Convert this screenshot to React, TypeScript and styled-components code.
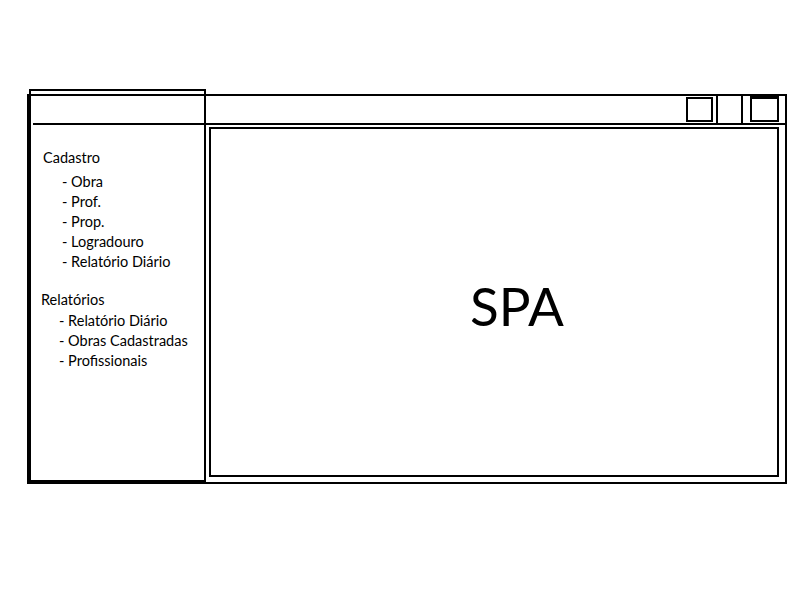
import styled, { createGlobalStyle } from "styled-components";

const GlobalStyle = createGlobalStyle`
  html, body {
    margin: 0;
    padding: 0;
    background: #ffffff;
  }

  body {
    width: 800px;
    height: 600px;
    font-family: Lato, "Open Sans", sans-serif;
    color: #000000;
  }
`;

const cadastro = ["Obra", "Prof.", "Prop.", "Logradouro", "Relatório Diário"];
const relatorios = ["Relatório Diário", "Obras Cadastradas", "Profissionais"];

export default function App() {
  return (
    <>
      <GlobalStyle />
      <Window>
        <TitleBar>
          <WinButton />
          <Separator $margin={3} />
          <Separator $margin={23} />
          <WinButton $wide />
        </TitleBar>

        <Sidebar>
          <MenuSection $offset={12} $titleGap={4}>
            <MenuTitle>Cadastro</MenuTitle>
            {cadastro.map((item) => (
              <MenuItem key={item} $indent={19}>
                - {item}
              </MenuItem>
            ))}
          </MenuSection>

          <MenuSection $offset={10} $titleGap={1} $top={18}>
            <MenuTitle>Relatórios</MenuTitle>
            {relatorios.map((item) => (
              <MenuItem key={item} $indent={18}>
                - {item}
              </MenuItem>
            ))}
          </MenuSection>
        </Sidebar>

        <Content>
          <Label>SPA</Label>
        </Content>
      </Window>
    </>
  );
}

export const Window = styled.div`
  width: 760px;
  height: 390px;
  margin: 94px 0 0 27px;

  box-sizing: border-box;
  border: 2px solid #000000;

  display: grid;
  grid-template-columns: 177px 1fr;
  grid-template-rows: 29px 1fr;
`;

export const TitleBar = styled.div`
  grid-column: 1 / 3;
  grid-row: 1;

  box-sizing: border-box;
  border-bottom: 2px solid #000000;
  margin-left: 4px;

  display: flex;
  justify-content: flex-end;
  align-items: stretch;

  padding-right: 6px;
`;

export const WinButton = styled.div<{ $wide?: boolean }>`
  box-sizing: border-box;
  width: ${(p) => (p.$wide ? "29px" : "27px")};
  height: ${(p) => (p.$wide ? "26px" : "25px")};
  margin-top: ${(p) => (p.$wide ? "0" : "1px")};
  margin-left: ${(p) => (p.$wide ? "7px" : "0")};

  border: 2px solid #000000;
  border-top-width: ${(p) => (p.$wide ? "3px" : "2px")};
`;

export const Separator = styled.div<{ $margin: number }>`
  width: 2px;
  margin-left: ${(p) => p.$margin}px;
  background: #000000;
`;

export const Sidebar = styled.nav`
  grid-column: 1;
  grid-row: 1 / 3;

  margin-top: -7px;

  box-sizing: border-box;
  border: 2px solid #000000;
  padding-top: 57px;

  display: flex;
  flex-direction: column;
`;

export const MenuSection = styled.div<{
  $offset: number;
  $titleGap: number;
  $top?: number;
}>`
  display: flex;
  flex-direction: column;

  margin-top: ${(p) => p.$top || 0}px;
  padding-left: ${(p) => p.$offset}px;

  font-size: 14.5px;
  line-height: 20px;

  & > div:first-child {
    margin-bottom: ${(p) => p.$titleGap}px;
  }
`;

export const MenuTitle = styled.div`
  white-space: nowrap;
`;

export const MenuItem = styled.div<{ $indent: number }>`
  padding-left: ${(p) => p.$indent}px;
  white-space: nowrap;
`;

export const Content = styled.main`
  grid-column: 2;
  grid-row: 2;

  margin: 2px 6px 5px 3px;

  box-sizing: border-box;
  border: 2px solid #000000;

  display: flex;
  justify-content: center;
  align-items: center;

  padding: 7px 0 0 46px;
`;

export const Label = styled.div`
  font-size: 53px;
  line-height: normal;
`;
